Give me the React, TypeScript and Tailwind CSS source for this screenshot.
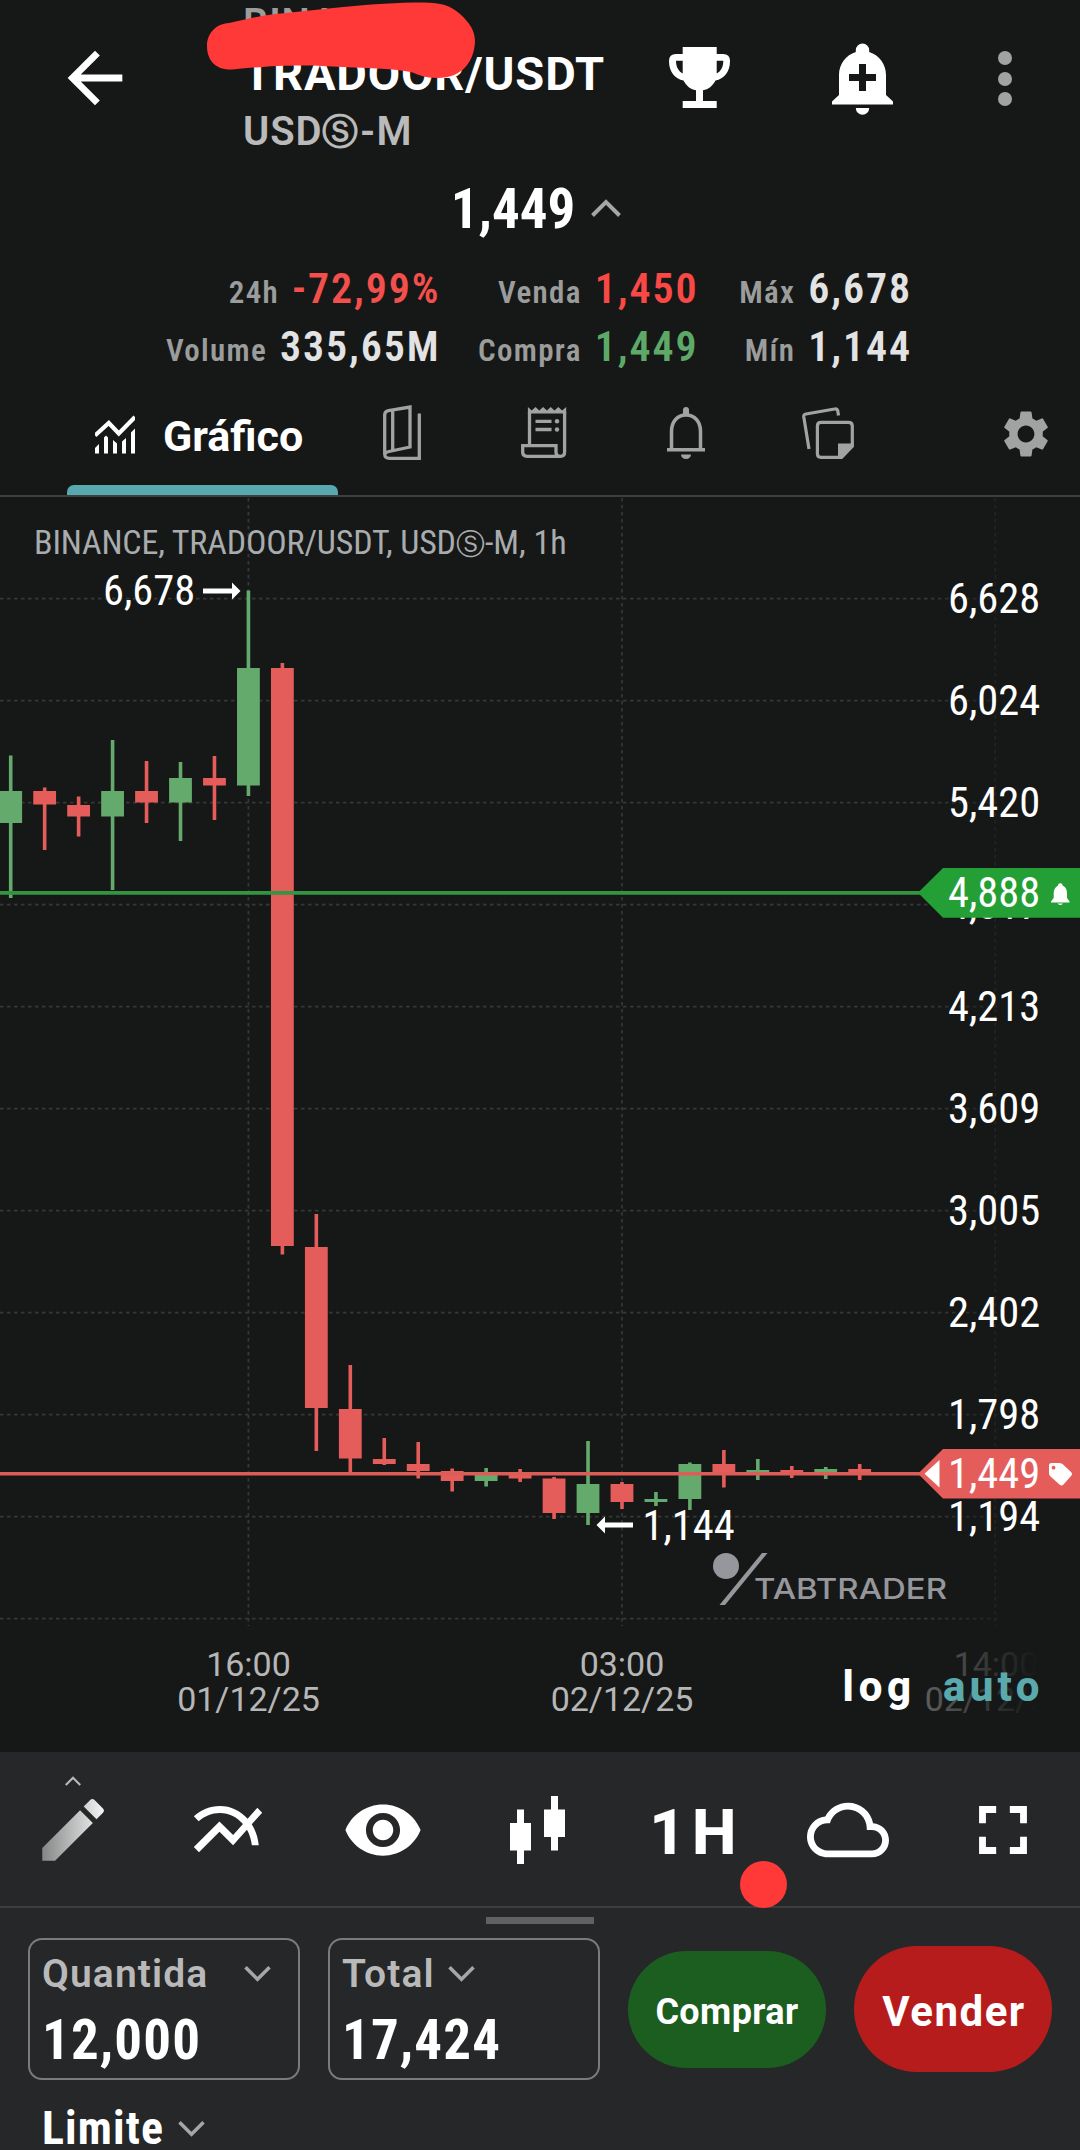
import type { ReactNode } from "react";
import {
  MdArrowBack,
  MdCloudQueue,
  MdFullscreen,
  MdMultilineChart,
  MdSettings,
  MdVisibility,
} from "react-icons/md";

type Candle = [high: number, top: number, bottom: number, low: number, up: boolean];

const FIRST_X = 10.7;
const PITCH = 33.96;

const candles: Candle[] = [
  [755.5, 791, 823, 898, true],
  [787.5, 791, 804.5, 850, false],
  [796.5, 805, 816.5, 836.5, false],
  [740, 791, 816.5, 890, true],
  [761, 791, 802.5, 823, false],
  [762, 778, 802.5, 841, true],
  [756, 778, 785.5, 820, false],
  [590.5, 668, 785.5, 796, true],
  [663, 668, 1246, 1254.5, false],
  [1214, 1247, 1408, 1451, false],
  [1365, 1409, 1458.5, 1473, false],
  [1438, 1459, 1464, 1465, false],
  [1442, 1464, 1471, 1478.5, false],
  [1468.5, 1471, 1481, 1491.5, false],
  [1468, 1473, 1481, 1486.5, true],
  [1469, 1472.5, 1478.5, 1482, false],
  [1477, 1478.5, 1513, 1519, false],
  [1441, 1484, 1513, 1525, true],
  [1482, 1484, 1502, 1509, false],
  [1492, 1499, 1502, 1506, true],
  [1462.5, 1464, 1499, 1510, true],
  [1450, 1464, 1473, 1487.5, false],
  [1459, 1470, 1472.5, 1480, true],
  [1466, 1470, 1473, 1478, false],
  [1467, 1469, 1473, 1479, true],
  [1464, 1469, 1473, 1480, false],
];

const priceLines: [number, string][] = [
  [598.7, "6,628"],
  [700.7, "6,024"],
  [802.7, "5,420"],
  [904.7, "4,817"],
  [1006.7, "4,213"],
  [1108.7, "3,609"],
  [1210.7, "3,005"],
  [1312.7, "2,402"],
  [1414.7, "1,798"],
  [1516.7, "1,194"],
  [1618.7, ""],
];

function Chevron({ up = false, className = "" }: { up?: boolean; className?: string }) {
  return (
    <svg viewBox="0 0 30 18" fill="none" stroke="currentColor" strokeWidth="4" className={className}>
      <path d={up ? "M1.5 16.5 15 3l13.5 13.5" : "M1.5 1.5 15 15 28.5 1.5"} />
    </svg>
  );
}

function Stat({ label, value, color }: { label: string; value: string; color: string }) {
  return (
    <div className="flex h-[58px] items-baseline justify-end gap-[13px] leading-[58px] font-semibold [font-stretch:75%]">
      <span className="text-[31px] tracking-[1.3px] text-[#9b9c9c]">{label}</span>
      <span className={`text-[42px] tracking-[1.9px] ${color}`}>{value}</span>
    </div>
  );
}

function Header() {
  return (
    <header className="relative flex h-[178px]">
      <MdArrowBack className="mt-[37px] ml-[54px] size-[82px] shrink-0 text-white" />
      <div className="ml-[107px] w-[399px] shrink-0 whitespace-nowrap">
        <div className="text-[40px] leading-[48px] font-semibold tracking-[0.8px] text-[#9b9c9c]">BINANCE</div>
        <div className="-mt-0.5 text-[47px] leading-[56px] font-bold tracking-[0.85px] text-white">TRADOOR/USDT</div>
        <div className="flex text-[40px] leading-[60px] font-semibold tracking-[0.9px] text-[#bababa]">
          <span>USD</span>
          <span className="text-[36px]">Ⓢ</span>
          <span className="pl-px tracking-[1.4px]">-M</span>
        </div>
      </div>
      <svg viewBox="0 0 61 61" className="mt-[47px] ml-[27px] h-[61px] w-[61px] shrink-0 fill-white">
        <path
          fillRule="evenodd"
          d="M13.7 0h34v7H54q7 0 7 7c0 11-6 18-14.5 19.5-3 5.5-7 9-12.5 9.8V54h13.7v7h-34v-7H27V43.3c-5.5-.8-9.5-4.3-12.5-9.8C6 32 0 25 0 14q0-7 7-7h6.7zM13.7 13.7H7C7 20 9.5 24 13.7 26.5zM47.7 13.7v12.8C52 24 54.3 20 54.3 13.7z"
        />
      </svg>
      <svg viewBox="0 0 61 72" className="mt-[43px] ml-[102px] h-[72px] w-[61px] shrink-0 fill-white">
        <path
          fillRule="evenodd"
          d="M23.8 9V7.3a6.7 6.7 0 0 1 13.4 0V9C47 12 54 21 54 32v20l7 6.5v3H0v-3L7 52V32C7 21 14 12 23.8 9zM27 21v10H17v7h10v10h7V38h10v-7H34V21z"
        />
        <path d="M23.8 65h13.4a6.7 6.7 0 0 1-13.4 0z" />
      </svg>
      <div className="mt-[51px] ml-[105px] flex flex-col gap-[6.5px]">
        <i className="size-[14px] rounded-full bg-[#a1a2a2]" />
        <i className="size-[14px] rounded-full bg-[#a1a2a2]" />
        <i className="size-[14px] rounded-full bg-[#a1a2a2]" />
      </div>
      <svg viewBox="200 0 280 90" className="absolute top-0 left-[200px] h-[90px] w-[280px] fill-[#ff3838]">
        <path d="M207 46C207 34 215 24 229 23C248 19 266 14 286 13L343 7C375 4 395 2.5 424 2.5C441 3 450 5 460 14C470 23 475 31 475 42C474 60 464 78 437 78C426 78 419 75 411 72C395 69 370 68 343 67L312 65.5C280 65 258 67 232 69.5C214 70 207 59 207 46z" />
      </svg>
    </header>
  );
}

function Tab({ children }: { children: ReactNode }) {
  return <div className="flex w-[142px] items-center justify-center text-[#a1a2a2]">{children}</div>;
}

function Tabs() {
  return (
    <nav className="flex h-[121px] items-stretch border-b-2 border-[#3d3e3e]">
      <div className="ml-[67px] flex w-[271px] flex-col">
        <div className="flex flex-1 items-center pt-[11px] pl-7">
          <svg viewBox="0 0 40 39" className="-mt-1 h-[39px] w-[40px] shrink-0">
            <path d="M0 20.5 13.8 8 23.8 18.5 40 2" fill="none" stroke="#fff" strokeWidth="4.2" />
            <path
              fill="#fff"
              d="M0 33l4-4v9.5H0zM9 22.5l2-2 2 2v16H9zM18 25l4 3.5v10h-4zM27 26.5l4-3.5v15.5h-4zM36 17.5l4-4v25h-4z"
            />
          </svg>
          <span className="ml-7 text-[43px] leading-none font-bold text-white">Gráfico</span>
        </div>
        <div className="h-[10px] rounded-t-[7px] bg-[#58a8b0]" />
      </div>
      <div className="-ml-[7px] flex pb-1.5">
        <Tab>
          <svg viewBox="0 0 38 55" className="h-[55px] w-[38px]" fill="none" stroke="currentColor" strokeWidth="3.3">
            <path d="M36.3 8.5V53.3H6.5Q1.7 53.3 1.7 49V10Q1.7 6.3 5.5 5.7L27 2V42L6 46.5Q1.7 47.5 1.7 50M9.7 5.5V46" />
          </svg>
        </Tab>
        <Tab>
          <svg viewBox="0 0 46 51" className="h-[51px] w-[46px]" fill="none" stroke="currentColor" strokeWidth="3.3">
            <path
              fill="currentColor"
              stroke="none"
              d="M6.9 0l3.8 3.5L14.5 0l3.8 3.5L22.1 0l3.8 3.5L29.7 0l3.8 3.5L37.3 0l3.8 3.5L45.2 0V6.5H6.9z"
            />
            <path d="M8.5 5V38M43.6 5V45Q43.6 49.3 39.3 49.3H6Q1.7 49.3 1.7 45.5V38.7H35V45Q35 49.3 39.3 49.3M14.5 14.3H30.5M14.5 22.5H30.5" />
            <circle cx="36" cy="14.3" r="2.2" fill="currentColor" stroke="none" />
            <circle cx="36" cy="22.5" r="2.2" fill="currentColor" stroke="none" />
          </svg>
        </Tab>
        <Tab>
          <svg viewBox="0 0 38 52" className="h-[52px] w-[38px]" fill="none" stroke="currentColor" strokeWidth="3.5">
            <path d="M4.5 43V24.5C4.5 14.5 10.5 8 19 8S33.5 14.5 33.5 24.5V43M0 42.7H38" />
            <path fill="currentColor" stroke="none" d="M16 9V3a3 3 0 0 1 6 0v6zM14 47.5h10a5 4.5 0 0 1-10 0z" />
          </svg>
        </Tab>
        <Tab>
          <svg viewBox="0 0 53 52" className="h-[52px] w-[53px]" fill="none" stroke="currentColor" strokeWidth="3.2">
            <path d="M7 42 1.8 10Q1.5 7.5 4 7L32.5 2Q35 1.5 35.8 4L36.5 8.5" />
            <path d="M39.5 50.3H19Q15.4 50.3 15.4 46.7V19Q15.4 15.4 19 15.4H46.5Q50.3 15.4 50.3 19V39z" />
            <path fill="currentColor" stroke="none" d="M36 36.5H51.5V40L40 51.5H36z" />
          </svg>
        </Tab>
      </div>
      <MdSettings className="mt-[30px] mr-[26px] ml-auto size-[56px] text-[#a1a2a2]" />
    </nav>
  );
}

function Chart() {
  return (
    <svg viewBox="0 497 1080 1255" className="block h-[1255px] w-full font-['Roboto',sans-serif]">
      <defs>
        <linearGradient id="gridFade" gradientUnits="userSpaceOnUse" x1="925" y1="0" x2="1040" y2="0">
          <stop offset="0" stopColor="#fff" />
          <stop offset="1" stopColor="#fff" stopOpacity="0" />
        </linearGradient>
        <linearGradient id="dateFade" gradientUnits="userSpaceOnUse" x1="910" y1="0" x2="1038" y2="0">
          <stop offset="0" stopColor="#b6b6b6" stopOpacity="0.5" />
          <stop offset="1" stopColor="#b6b6b6" stopOpacity="0" />
        </linearGradient>
        <mask id="gridMask" maskUnits="userSpaceOnUse" x="0" y="497" width="1080" height="1255">
          <rect x="0" y="497" width="925" height="1255" fill="#fff" />
          <rect x="925" y="497" width="155" height="1255" fill="url(#gridFade)" />
        </mask>
      </defs>

      <g stroke="#363837" strokeWidth="1.7" strokeDasharray="3.5 3.5" mask="url(#gridMask)">
        {priceLines.map(([y]) => (
          <path key={y} d={`M0 ${y}H1000`} />
        ))}
        {[248.4, 622, 995.3].map((x) => (
          <path key={x} d={`M${x} 498V1626`} />
        ))}
      </g>

      <text x="34" y="554" fontSize="34" fill="#a9acae" className="[font-stretch:75%]">
        <tspan className="tracking-[-0.15px]">BINANCE, TRADOOR/USDT, USD</tspan>
        <tspan fontSize="29">Ⓢ</tspan>
        <tspan>-M, 1h</tspan>
      </text>

      {candles.map(([high, top, bottom, low, up], i) => {
        const x = FIRST_X + i * PITCH;
        return (
          <g key={i} fill={up ? "#64aa6c" : "#e55d5a"}>
            <rect x={x - 1.8} y={high} width="3.6" height={low - high} />
            <rect x={x - 11.4} y={top} width="22.8" height={bottom - top} />
          </g>
        );
      })}

      <g fill="#fff" fontSize="42.5" className="[font-stretch:75%]">
        <text x="103" y="605">6,678</text>
        <text x="642.5" y="1539.5">1,144</text>
        {priceLines.map(([y, label]) => (
          <text key={y} x="948" y={y + 14.5}>
            {label}
          </text>
        ))}
      </g>
      <path
        d="M203 588.5H232V582.5L240.5 591L232 599.5V593.5H203zM633 1522.5H605V1516.5L596.5 1525L605 1533.5V1527.5H633z"
        fill="#fff"
      />

      <path d="M0 892.8H922" stroke="#339541" strokeWidth="3.8" />
      <path d="M918 892.8 943 868H1080V917.7H943z" fill="#239f35" />
      <path d="M0 1473.7H922" stroke="#dc5c58" strokeWidth="3.6" />
      <path d="M918 1473.7 943 1449H1080V1498.5H943z" fill="#e55d5a" />
      <path d="M924.5 1473.7 939.5 1460V1487.5z" fill="#fff" />
      <g fill="#fff" fontSize="42.5" className="[font-stretch:75%]">
        <text x="948" y="906.5">4,888</text>
        <text x="948" y="1487.5">1,449</text>
      </g>
      <path
        d="M1058 885.5a2.3 2.3 0 0 1 4.6 0C1066 887 1067 890 1067 893.5V898L1069.5 901.5V902.5H1051V901.5L1053.7 898V893.5C1053.7 890 1055 887 1058 885.5zM1057.5 903.5H1063Q1060.3 906.5 1057.5 903.5z"
        fill="#fff"
      />
      <path
        fillRule="evenodd"
        d="M1049 1465.5Q1049 1463 1051.5 1463H1059Q1061 1463 1062.5 1464L1071 1472Q1073 1474 1071 1476L1063.5 1484.5Q1061.5 1486.5 1059.5 1484.5L1050.5 1476.5Q1049 1475 1049 1473zM1053.5 1465.8a1.9 1.9 0 1 0 .1 0z"
        fill="#fff"
      />

      <g fill="#95979c">
        <circle cx="726" cy="1566" r="13" />
        <path d="M762 1553H767.5L725 1605H719.5z" />
        <text
          x="754"
          y="1598.5"
          fontSize="28.5"
          fontWeight="500"
          textLength="193"
          lengthAdjust="spacingAndGlyphs"
          className="font-['Inter',sans-serif]"
        >
          TABTRADER
        </text>
      </g>

      <g fill="#b6b6b6" fontSize="34" textAnchor="middle">
        <text x="248.5" y="1676">16:00</text>
        <text x="248.5" y="1711">01/12/25</text>
        <text x="622" y="1676">03:00</text>
        <text x="622" y="1711">02/12/25</text>
        <g fill="url(#dateFade)">
          <text x="996" y="1676">14:00</text>
          <text x="996" y="1711">02/12/25</text>
        </g>
      </g>
      <g fontSize="42" fontWeight="800">
        <text x="842.5" y="1700.5" fill="#fff" className="tracking-[4.8px]">log</text>
        <text x="943" y="1700.5" fill="#5aa9ad" className="tracking-[4.3px]">auto</text>
      </g>
    </svg>
  );
}

function Tool({ children }: { children: ReactNode }) {
  return <div className="relative flex w-[155px] shrink-0 items-center justify-center">{children}</div>;
}

function Toolbar() {
  return (
    <div className="relative h-[156px] border-b-2 border-[#3d3e3f] bg-[#252728]">
      <div className="-ml-[5px] flex h-[154px] w-[1085px] pt-0.5 text-white">
        <Tool>
          <Chevron up className="absolute top-[22px] left-[70px] h-[10px] w-[16px] text-[#b9b9b9]" />
          <svg viewBox="0 0 24 24" className="size-[82px]">
            <defs>
              <linearGradient id="pencil" x1="0" y1="0" x2="1" y2="0">
                <stop offset="0" stopColor="#858686" />
                <stop offset="1" stopColor="#f4f4f4" />
              </linearGradient>
            </defs>
            <path
              fill="url(#pencil)"
              d="M3 17.25V21h3.75L17.81 9.94l-3.75-3.75L3 17.25zM20.71 7.04a.996.996 0 0 0 0-1.41l-2.34-2.34a.996.996 0 0 0-1.41 0l-1.83 1.83 3.75 3.75 1.83-1.83z"
            />
          </svg>
        </Tool>
        <Tool>
          <MdMultilineChart className="size-[82px]" />
        </Tool>
        <Tool>
          <MdVisibility className="size-[82px]" />
        </Tool>
        <Tool>
          <svg viewBox="0 0 55 68" className="h-[68px] w-[55px] fill-white">
            <path d="M7 13.5h7V27h7v27.5h-7V68H7V54.5H0V27h7zM41 0h7v13.5h7V41h-7v13.5h-7V41h-7V13.5h7z" />
          </svg>
        </Tool>
        <Tool>
          <span className="pt-1 pl-[7px] text-[63px] leading-none font-extrabold tracking-[6.5px]">1H</span>
        </Tool>
        <Tool>
          <MdCloudQueue className="size-[82px]" />
        </Tool>
        <Tool>
          <MdFullscreen className="size-[82px]" />
        </Tool>
      </div>
      <i className="absolute top-[109px] left-[740px] size-[47px] rounded-full bg-[#ff3838]" />
    </div>
  );
}

function Field({ label, value, wide = false }: { label: string; value: string; wide?: boolean }) {
  return (
    <div className="h-[142px] w-[272px] shrink-0 rounded-[14px] border-2 border-[#7a7b7b] pt-[11px] pl-[12px]">
      <div className="flex h-[46px] items-center">
        <span className="text-[39px] leading-[46px] font-semibold tracking-[1.1px] text-[#b9b9b9]">{label}</span>
        <Chevron className={`h-[16px] w-[27px] text-[#a5a6a6] ${wide ? "ml-[36px]" : "ml-[13px]"}`} />
      </div>
      <div className="mt-[11px] text-[55px] leading-[64px] font-bold tracking-[1.1px] text-white [font-stretch:75%]">
        {value}
      </div>
    </div>
  );
}

function OrderPanel() {
  return (
    <section className="h-[242px] overflow-hidden bg-[#252728]">
      <div className="mx-auto mt-[9px] h-[7px] w-[108px] bg-[#606162]" />
      <div className="mt-[14px] ml-[28px] flex items-center">
        <Field label="Quantida" value="12,000" wide />
        <div className="w-[28px] shrink-0" />
        <Field label="Total" value="17,424" />
        <button className="ml-[28px] h-[117px] w-[198px] shrink-0 rounded-full bg-[#1b5e20] pt-1.5 text-[36px] font-bold tracking-[0.4px] text-white">
          Comprar
        </button>
        <button className="ml-[28px] h-[126px] w-[198px] shrink-0 rounded-full bg-[#b71c1c] pt-1 pl-0.5 text-[42px] font-bold tracking-[1.5px] text-white">
          Vender
        </button>
      </div>
      <div className="mt-[24px] ml-[42px] flex items-center">
        <span className="text-[46px] leading-[49px] font-bold tracking-[1.1px] text-white [font-stretch:75%]">
          Limite
        </span>
        <Chevron className="ml-[14px] h-[16px] w-[27px] text-[#a5a6a6]" />
      </div>
    </section>
  );
}

export default function App() {
  return (
    <main className="flex h-[2150px] w-[1080px] flex-col overflow-hidden bg-[#161817] font-['Roboto',sans-serif]">
      <Header />
      <div className="flex h-[64px] items-center justify-center pr-[8px]">
        <span className="-mt-0.5 text-[55px] leading-[64px] font-bold text-white [font-stretch:75%]">1,449</span>
        <Chevron up className="-mt-1 ml-4 h-[18px] w-[30px] text-[#a5a6a6]" />
      </div>
      <div className="mt-[18px] flex h-[116px]">
        <div className="w-[440.5px]">
          <Stat label="24h" value="-72,99%" color="text-[#f34f4c]" />
          <Stat label="Volume" value="335,65M" color="text-[#e3e3e3]" />
        </div>
        <div className="w-[258px]">
          <Stat label="Venda" value="1,450" color="text-[#f94845]" />
          <Stat label="Compra" value="1,449" color="text-[#5fa968]" />
        </div>
        <div className="w-[213.5px]">
          <Stat label="Máx" value="6,678" color="text-[#e3e3e3]" />
          <Stat label="Mín" value="1,144" color="text-[#e3e3e3]" />
        </div>
      </div>
      <Tabs />
      <Chart />
      <Toolbar />
      <OrderPanel />
    </main>
  );
}
